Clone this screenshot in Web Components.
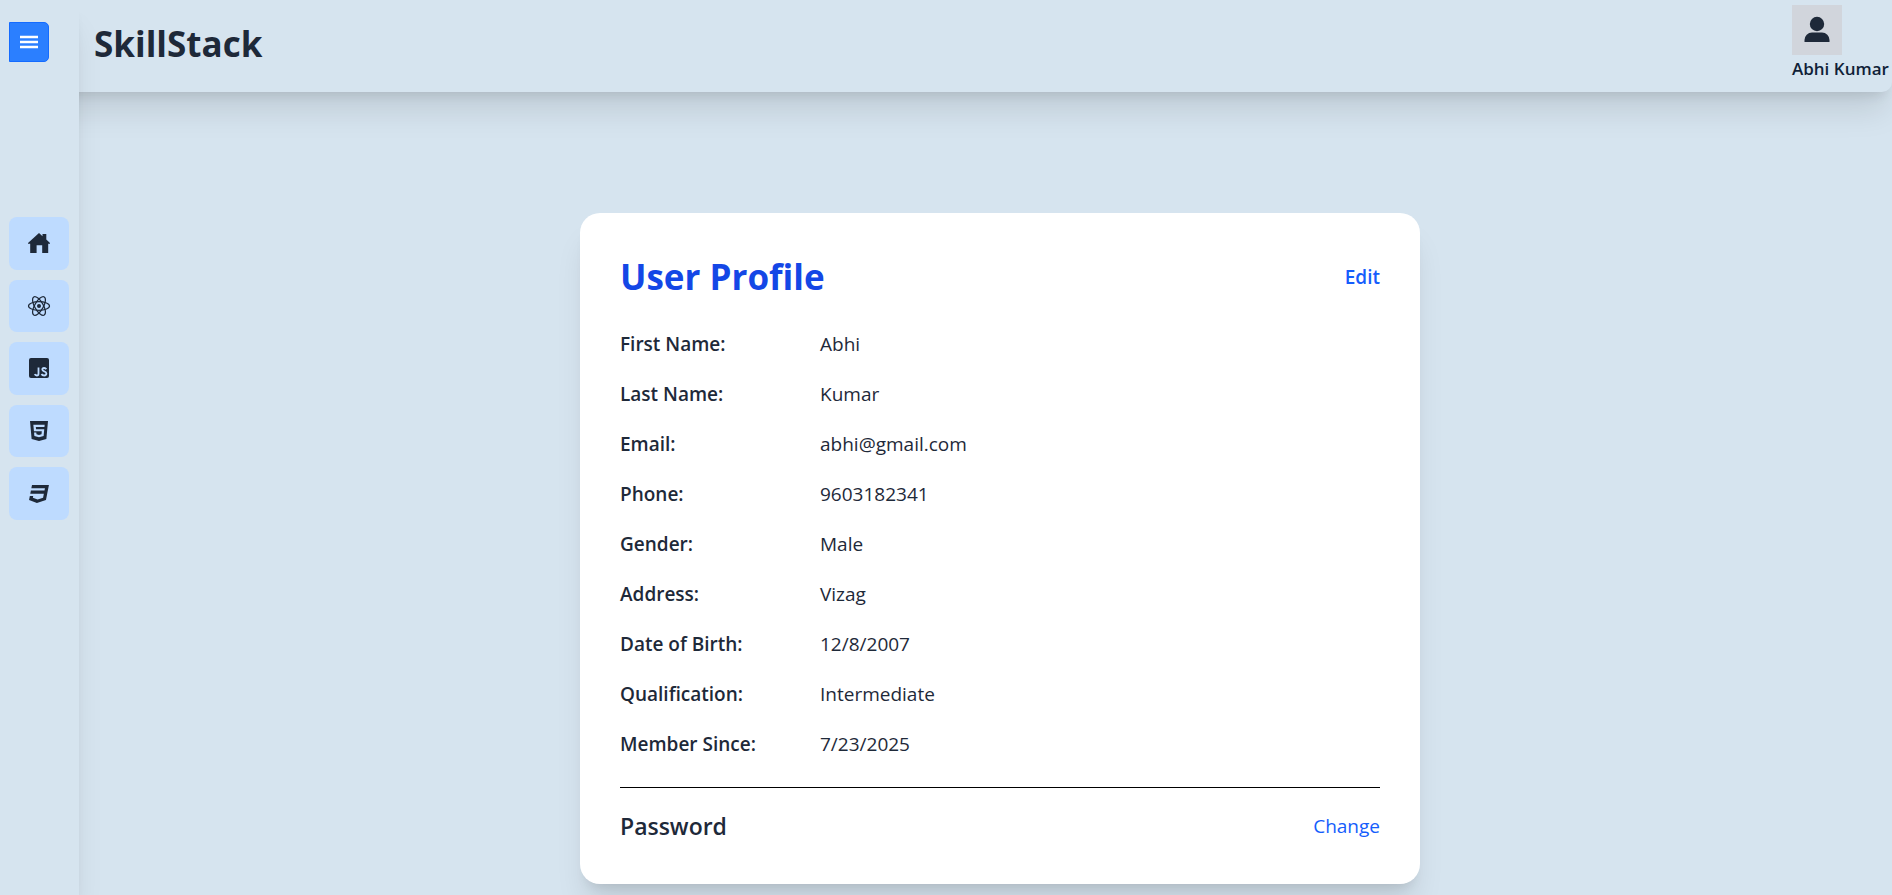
<!DOCTYPE html>
<html lang="en">
<head>
<meta charset="utf-8">
<title>SkillStack</title>
<style>
html,body{margin:0;min-height:100%}
body{background:#d6e4ef;color:#1e2939;font-family:"Open Sans","Noto Sans",sans-serif;--shadow:0 25px 31px -6px rgba(0,0,0,.1),0 10px 12px -7px rgba(0,0,0,.1)}
</style>
</head>
<body>
<skill-app></skill-app>
<script>
const define = (name, html) => {
  const t = document.createElement('template');
  t.innerHTML = html;
  customElements.define(name, class extends HTMLElement {
    constructor() {
      super();
      this.attachShadow({ mode: 'open' }).append(t.content.cloneNode(true));
    }
  });
};

define('nav-item', `
<style>
:host{display:flex;flex:1}
a{flex:1;display:flex;align-items:center;justify-content:center;background:#bedbff;border-radius:8px;color:#1e2939}
</style>
<a href="#"><slot></slot></a>`);

define('side-bar', `
<style>
:host{display:flex;flex-direction:column;align-items:flex-start;gap:155px;width:79px;box-sizing:border-box;padding:22px 9px;background:#d6e4ef;box-shadow:var(--shadow);z-index:2}
button{width:40px;height:40px;padding:0;border:1px solid #156bff;border-radius:0 5px 5px 0;background:#2b7fff;color:#fff;display:flex;align-items:center;justify-content:center}
nav{display:flex;flex-direction:column;gap:10px;width:60px;height:303px}
svg{width:24px;height:24px;display:block}
</style>
<button aria-label="Toggle menu"><svg viewBox="0 0 24 24" fill="none" stroke="currentColor" stroke-width="2.500"><path d="M3 7h18M3 12h18M3 17h18"/></svg></button>
<nav>
<nav-item><svg viewBox="0 0 24 24" fill="currentColor"><path d="M12 2L1 12v.8h2.200V22h6.400v-7.700h5.600V22h6v-9.200H23V12l-3.700-3.400V3h-3.800v2.200z"/></svg></nav-item>
<nav-item><svg viewBox="0 0 24 24" fill="none" stroke="currentColor" stroke-width="1.200"><circle cx="12" cy="12" r="2" fill="currentColor" stroke="none"/><ellipse cx="12" cy="12" rx="10.500" ry="4.300"/><ellipse cx="12" cy="12" rx="10.500" ry="4.300" transform="rotate(60 12 12)"/><ellipse cx="12" cy="12" rx="10.500" ry="4.300" transform="rotate(120 12 12)"/></svg></nav-item>
<nav-item><svg viewBox="0 0 24 24"><rect x="2" y="2" width="20" height="20" rx="2" fill="currentColor"/><path d="M11.500 11.500v6.200q0 1.800-1.700 1.800-1.500 0-2.100-1.300M19.300 13.200q-.7-1.200-2.200-1.200-1.800 0-1.800 1.600 0 1.200 1.900 1.800 2.200.7 2.200 2.200 0 1.900-2.200 1.900-1.900 0-2.700-1.500" fill="none" stroke="#bedbff" stroke-width="1.800"/></svg></nav-item>
<nav-item><svg viewBox="0 0 24 24" fill="currentColor"><path d="M12 18.178l4.620-1.256.623-6.778H9.026L8.822 7.890h8.626l.227-2.211H6.325l.636 6.678h7.820l-.261 2.866-2.520.667-2.520-.667-.158-1.844h-2.270l.329 3.544L12 18.178zM3 2h18l-1.623 18L12 22l-7.377-2L3 2z"/></svg></nav-item>
<nav-item><svg viewBox="0 0 24 24" fill="currentColor"><path d="M5 3l-.650 3.340h13.590L17.500 8.500H3.920l-.660 3.330h13.590l-.760 3.810-5.480 1.810-4.750-1.810.330-1.640H2.850l-.790 4 7.850 3 9.050-3 1.200-6.030.240-1.210L21.940 3H5z"/></svg></nav-item>
</nav>`);

define('top-bar', `
<style>
:host{display:flex;justify-content:space-between;align-items:flex-start;height:92px;margin-left:-79px;padding-left:94px;background:#d6e4ef;border-radius:0 0 10px 0;box-shadow:var(--shadow)}
h1{margin:0;font-size:35px;line-height:88px;font-weight:700}
.user{display:flex;flex-direction:column;width:100px;padding-top:5px;font-size:17px;line-height:28px;font-weight:600;white-space:nowrap;color:#101f38}
.avatar{width:50px;height:50px;background:#d1d5dc;display:flex;align-items:center;justify-content:center;color:#1e2939}
svg{width:30px;height:30px}
</style>
<h1>SkillStack</h1>
<div class="user"><div class="avatar"><svg viewBox="0 0 30 30" fill="currentColor"><circle cx="15" cy="9" r="7.200"/><path d="M2.500 27v-2a7.500 7.500 0 0 1 7.500-7.500h10a7.500 7.500 0 0 1 7.500 7.500v2z"/></svg></div>Abhi Kumar</div>`);

define('profile-field', `
<style>
:host{display:grid;grid-template-columns:200px 1fr;font-size:19px;line-height:30px}
b{font-weight:600}
</style>
<b><slot name="label"></slot></b><span><slot></slot></span>`);

define('profile-card', `
<style>
:host{display:block;box-sizing:border-box;width:100%;max-width:840px;padding:40px;background:#fff;border-radius:20px;box-shadow:var(--shadow)}
header,footer{display:flex;justify-content:space-between;align-items:center}
h2{margin:0;font-size:35px;line-height:48px;font-weight:700;color:#1447e6}
h3{margin:0;font-size:23px;line-height:36px;font-weight:600}
button{font:inherit;font-size:19px;line-height:30px;border:0;padding:0;background:none;color:#155dfc}
.edit{font-weight:600}
.fields{display:flex;flex-direction:column;gap:20px;margin:28px 0}
footer{border-top:1px solid #000;padding-top:20px}
</style>
<header><h2>User Profile</h2><button class="edit">Edit</button></header>
<div class="fields"><slot></slot></div>
<footer><h3>Password</h3><button>Change</button></footer>`);

define('skill-app', `
<style>
:host{display:flex;min-height:100vh}
side-bar{flex:none}
.body{flex:1;min-width:0}
main{display:flex;justify-content:center;padding:121px 0 10px 29px}
</style>
<side-bar></side-bar>
<div class="body">
<top-bar></top-bar>
<main><profile-card>
<profile-field><span slot="label">First Name:</span>Abhi</profile-field>
<profile-field><span slot="label">Last Name:</span>Kumar</profile-field>
<profile-field><span slot="label">Email:</span>abhi@gmail.com</profile-field>
<profile-field><span slot="label">Phone:</span>9603182341</profile-field>
<profile-field><span slot="label">Gender:</span>Male</profile-field>
<profile-field><span slot="label">Address:</span>Vizag</profile-field>
<profile-field><span slot="label">Date of Birth:</span>12/8/2007</profile-field>
<profile-field><span slot="label">Qualification:</span>Intermediate</profile-field>
<profile-field><span slot="label">Member Since:</span>7/23/2025</profile-field>
</profile-card></main>
</div>`);
</script>
</body>
</html>
